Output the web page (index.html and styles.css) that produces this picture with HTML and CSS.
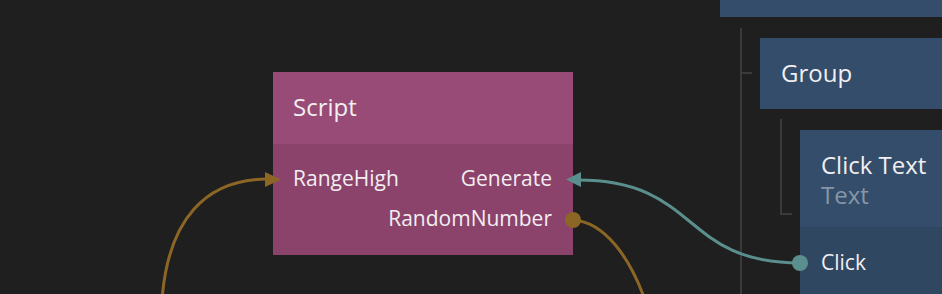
FILE: index.html
```html
<!DOCTYPE html>
<html lang="en">
<head>
    <meta charset="UTF-8">
    <meta name="viewport" content="width=device-width, initial-scale=1.0">
    <title>Node Graph</title>
    <link rel="stylesheet" href="styles.css">
</head>
<body>
<div class="canvas">
    <div class="tree-line tree-line1"></div>
    <div class="tree-line tree-line2"></div>

    <div class="node node-script">
        <div class="node-header">Script</div>
        <div class="node-body">
            <div class="port-row">
                <span>RangeHigh</span>
                <span>Generate</span>
            </div>
            <div class="port-row port-row-right">
                <span>RandomNumber</span>
            </div>
        </div>
    </div>

    <div class="node node-blue node-top"></div>

    <div class="node node-blue node-group">
        <div class="node-header">Group</div>
    </div>

    <div class="node node-blue node-click">
        <div class="node-header">
            <div class="title">Click Text</div>
            <div class="subtitle">Text</div>
        </div>
        <div class="node-body">
            <div class="port-row">
                <span>Click</span>
            </div>
        </div>
    </div>

    <svg class="wires" width="942" height="294" viewBox="0 0 942 294">
        <path d="M162 300 C 168 220, 205 179, 268 179" stroke="#8c6624" stroke-width="3" fill="none"/>
        <polygon points="265,172 281,179.5 265,187" fill="#8c6624"/>
        <path d="M573 220 C 605 222, 630 258, 645 300" stroke="#8c6624" stroke-width="3" fill="none"/>
        <circle cx="573" cy="220" r="8" fill="#8c6624"/>
        <path d="M578 180 C 700 180, 680 263, 800 263" stroke="#5a8f8e" stroke-width="3" fill="none"/>
        <polygon points="581,172 566,179.5 581,187" fill="#5a8f8e"/>
        <circle cx="800" cy="263" r="8" fill="#5a8f8e"/>
    </svg>
</div>
</body>
</html>
```

FILE: styles.css
```css
body {
    margin: 0;
    background-color: #1f1f1f;
    font-family: "Open Sans", "Noto Sans", sans-serif;
    color: #f2eef1;
    overflow: hidden;
}

.canvas {
    position: relative;
    width: 942px;
    height: 294px;
    overflow: hidden;
}

.node {
    position: absolute;
}

.node-header {
    padding-left: 20px;
    font-size: 24px;
}

.node-body {
    display: flex;
    flex-direction: column;
    padding: 14px 21px 19px 20px;
    font-size: 21px;
}

.port-row {
    height: 39px;
    display: flex;
    align-items: center;
    justify-content: space-between;
    white-space: nowrap;
}

.port-row + .port-row {
    margin-top: 1px;
}

.port-row-right {
    justify-content: flex-end;
}

.node-script {
    left: 273px;
    top: 72px;
    width: 300px;
}

.node-script .node-header {
    background-color: #984b76;
    height: 69px;
    padding-bottom: 3px;
    display: flex;
    align-items: center;
}

.node-script .node-body {
    background-color: #8b436c;
    padding-bottom: 18px;
}

.node-blue {
    background-color: #334d6a;
    right: -20px;
}

.node-top {
    left: 720px;
    top: -20px;
    height: 37px;
}

.node-group {
    left: 760px;
    top: 38px;
    height: 71px;
}

.node-group .node-header {
    height: 69px;
    padding-bottom: 2px;
    display: flex;
    align-items: center;
    padding-left: 21px;
}

.node-click {
    left: 800px;
    top: 130px;
    height: 200px;
    background-color: #2f4761;
}

.node-click .node-header {
    background-color: #334d6a;
    padding: 20px 0 17px 21px;
    line-height: 30px;
}

.node-click .subtitle {
    color: #8796a7;
}

.node-click .node-body {
    padding-top: 15px;
    padding-left: 21px;
}

.tree-line {
    position: absolute;
    border-left: 2px solid #3a3a3a;
}

.tree-line1 {
    left: 740px;
    top: 28px;
    height: 280px;
}

.tree-line1::after {
    content: "";
    position: absolute;
    left: 0;
    top: 44px;
    width: 10px;
    border-top: 2px solid #3a3a3a;
}

.tree-line2 {
    left: 780px;
    top: 119px;
    height: 94px;
    width: 10px;
    border-bottom: 2px solid #3a3a3a;
}

.wires {
    position: absolute;
    left: 0;
    top: 0;
}
```
